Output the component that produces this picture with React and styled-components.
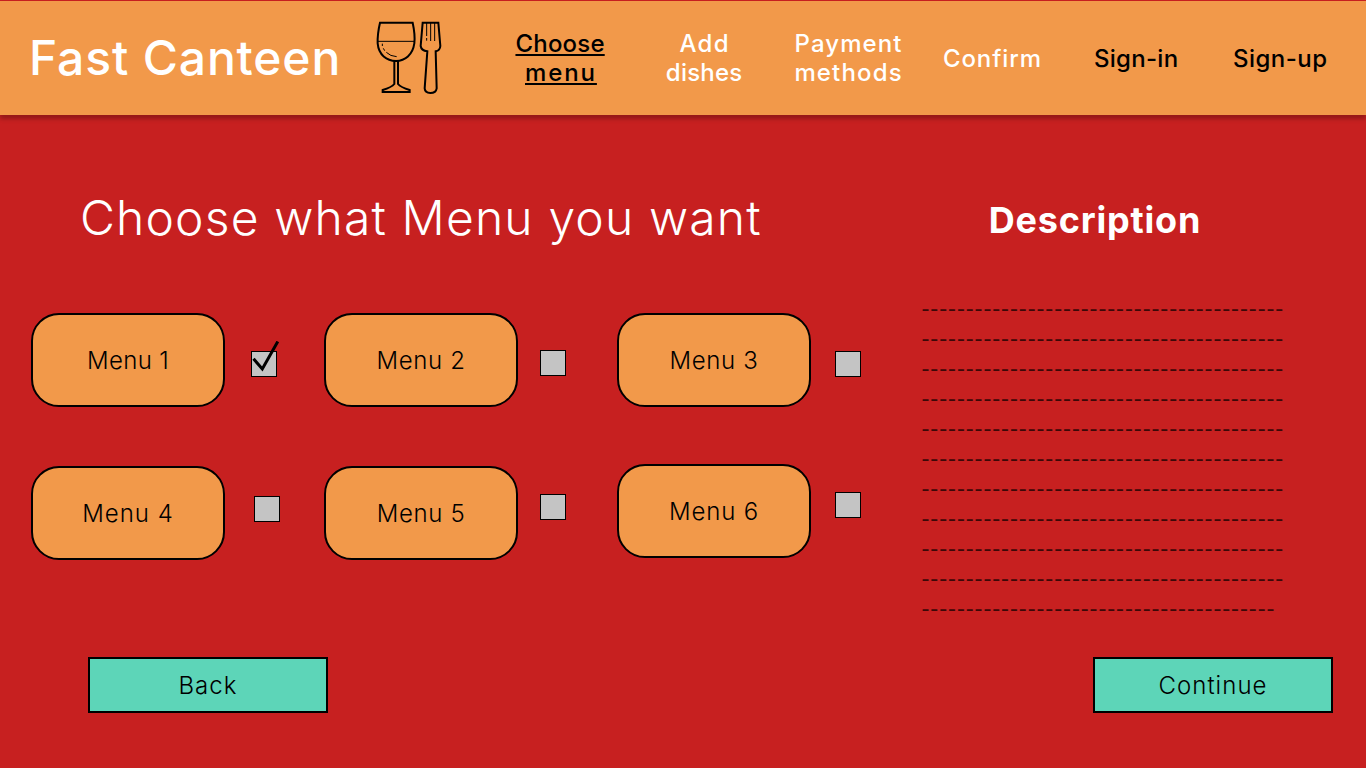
import React from "react";
import styled, { createGlobalStyle } from "styled-components";

const GlobalStyle = createGlobalStyle`
  * { box-sizing: border-box; }
  body {
    margin: 0;
    background: #c72020;
    font-family: Inter, "Open Sans", sans-serif;
    color: #000;
  }
`;

const Page = styled.div`
  width: 1366px;
  height: 768px;
  padding-top: 1px;
  overflow: hidden;
`;

const Header = styled.header`
  display: flex;
  align-items: center;
  height: 114px;
  padding-left: 29px;
  background: #f2994a;
  box-shadow: 0 4px 4px rgba(0, 0, 0, 0.25);
`;

const Brand = styled.h1`
  width: 347px;
  margin: 0;
  color: #fff;
  font-size: 48px;
  font-weight: 500;
  line-height: 56px;
  letter-spacing: 0.85px;
  white-space: nowrap;
`;

const CutleryIcon = styled.svg`
  flex: none;
  width: 67px;
  height: 76px;
  fill: none;
  stroke: #000;
  stroke-width: 6;
`;

const Nav = styled.nav`
  display: flex;
  align-items: center;
  margin-left: 45px;
`;

const NavItem = styled.a`
  display: flex;
  flex-direction: column;
  align-items: center;
  width: 144px;
  color: ${(p) => (p.$dark ? "#000" : "#fff")};
  font-size: 24px;
  font-weight: 500;
  line-height: 29px;
`;

const NavWord = styled.span`
  letter-spacing: ${(p) => p.$track}px;
  margin-right: -${(p) => p.$track}px;
  text-decoration: ${(p) => (p.$underline ? "underline" : "none")};
  text-decoration-thickness: 1.5px;
  text-underline-offset: 2px;
  text-decoration-skip-ink: none;
`;

const Main = styled.main`
  display: flex;
  height: 542px;
  padding-top: 73px;
`;

const MenuSection = styled.section`
  width: 921px;
  padding-left: 31px;
`;

const Heading = styled.h2`
  margin: 0 0 65px;
  padding-left: 49px;
  color: #fff;
  font-size: 48px;
  font-weight: 340;
  line-height: 60px;
  letter-spacing: 1.15px;
  white-space: nowrap;
`;

const MenuGrid = styled.div`
  display: grid;
  grid-template-columns: repeat(3, 293px);
  grid-auto-rows: 153px;
`;

const MenuOption = styled.div`
  display: flex;
  align-items: flex-start;
  gap: ${(p) => p.$gap}px;
  margin-top: ${(p) => -p.$raise}px;
`;

const MenuCard = styled.button`
  width: 194px;
  height: 94px;
  padding: 2px 0 0;
  border: 2px solid #000;
  border-radius: 28px;
  background: #f2994a;
  color: #000;
  font: 300 24px/28px Inter, sans-serif;
  letter-spacing: ${(p) => p.$track}px;
`;

const Checkbox = styled.span`
  position: relative;
  width: 26px;
  height: 26px;
  margin-top: ${(p) => p.$drop}px;
  border: 1px solid #000;
  background: #c4c4c4;
`;

const CheckMark = styled.svg`
  position: absolute;
  left: -1px;
  top: -11px;
  width: 30px;
  height: 32px;
  fill: none;
  stroke: #000;
  stroke-width: 3;
`;

const DescriptionPanel = styled.aside`
  width: 362px;
`;

const DescriptionTitle = styled.h3`
  margin: 0;
  padding: 2px 14px 0 0;
  color: #fff;
  font-size: 36px;
  font-weight: 700;
  line-height: 60px;
  letter-spacing: 0.8px;
  text-align: center;
`;

const DescriptionText = styled.div`
  margin-top: 43px;
  color: #3c0808;
  font-family: Lato, sans-serif;
  font-size: 24px;
  line-height: 30px;
  letter-spacing: -0.07px;
  white-space: nowrap;
`;

const Footer = styled.footer`
  display: flex;
  justify-content: space-between;
  padding: 0 33px 0 88px;
`;

const ActionButton = styled.button`
  width: 240px;
  height: 56px;
  padding: 2px 0 0;
  border: 2px solid #000;
  background: #5dd5b8;
  color: #000;
  font: 300 24px/28px Inter, sans-serif;
  letter-spacing: 1.05px;
`;

const navItems = [
  { words: [["Choose", 0.2], ["menu", 1.9]], dark: true, active: true },
  { words: [["Add", 1.3], ["dishes", 0.2]] },
  { words: [["Payment", 1.1], ["methods", 1.15]] },
  { words: [["Confirm", 0.9]] },
  { words: [["Sign-in", 0.3]], dark: true },
  { words: [["Sign-up", 0.5]], dark: true },
];

const menus = [
  { name: "Menu 1", gap: 26, drop: 38, track: 0.3, checked: true },
  { name: "Menu 2", gap: 22, drop: 37, track: 0.65 },
  { name: "Menu 3", gap: 24, drop: 38, track: 0.65 },
  { name: "Menu 4", gap: 29, drop: 30, track: 1 },
  { name: "Menu 5", gap: 22, drop: 28, track: 0.65 },
  { name: "Menu 6", gap: 24, drop: 28, track: 0.8, raise: 2 },
];

const descriptionLines = [...Array(10).fill(41), 40];

function Cutlery() {
  return (
    <CutleryIcon viewBox="48 30 201 228">
      <path d="M60 38H158Q166 75 163 100C158 135 135 152 108 153C80 152 56 135 53 100Q52 72 60 38Z" />
      <path d="M103 153V222Q95 232 68 240V246H149V240Q122 232 114 222V153" />
      <path d="M53 94H163" strokeWidth="3" />
      <path d="M67 101V108M70 115L74 122M79 127Q91 139 110 140" strokeWidth="3" />
      <path d="M188 38H235L241 108Q240 122 227 124L230 235Q228 249 211 249Q195 248 194 235L202 124Q184 122 182 108Z" />
      <path d="M200 38V78M200 84V92M212 38V93M224 38V93" strokeWidth="3" />
    </CutleryIcon>
  );
}

export default function App() {
  return (
    <Page>
      <GlobalStyle />
      <Header>
        <Brand>Fast Canteen</Brand>
        <Cutlery />
        <Nav>
          {navItems.map((item) => (
            <NavItem key={item.words[0][0]} $dark={item.dark}>
              {item.words.map(([word, track]) => (
                <NavWord key={word} $track={track} $underline={item.active}>{word}</NavWord>
              ))}
            </NavItem>
          ))}
        </Nav>
      </Header>
      <Main>
        <MenuSection>
          <Heading>Choose what Menu you want</Heading>
          <MenuGrid>
            {menus.map((m) => (
              <MenuOption key={m.name} $gap={m.gap} $raise={m.raise || 0}>
                <MenuCard $track={m.track}>{m.name}</MenuCard>
                <Checkbox $drop={m.drop}>
                  {m.checked && (
                    <CheckMark viewBox="0 -10 30 32">
                      <path d="M2.5 7.8L11.3 18L26.8 -9.5" />
                    </CheckMark>
                  )}
                </Checkbox>
              </MenuOption>
            ))}
          </MenuGrid>
        </MenuSection>
        <DescriptionPanel>
          <DescriptionTitle>Description</DescriptionTitle>
          <DescriptionText>
            {descriptionLines.map((count, i) => (
              <div key={i}>{"-".repeat(count)}</div>
            ))}
          </DescriptionText>
        </DescriptionPanel>
      </Main>
      <Footer>
        <ActionButton>Back</ActionButton>
        <ActionButton>Continue</ActionButton>
      </Footer>
    </Page>
  );
}
